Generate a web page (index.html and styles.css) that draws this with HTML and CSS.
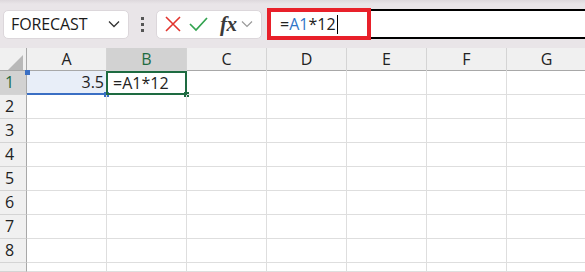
FILE: index.html
```html
<!DOCTYPE html>
<html lang="en">
<head>
	<meta charset="UTF-8">
	<title>Formula</title>
	<link rel="stylesheet" href="styles.css">
</head>
<body>
<div class="toolbar">
	<div class="namebox">
		<span class="name">FORECAST</span>
		<svg class="chev" width="12" height="8" viewBox="0 0 12 8"><path d="M1 1.5 L6 6.5 L11 1.5" fill="none" stroke="#333" stroke-width="1.3"/></svg>
	</div>
	<div class="dots"><i></i><i></i><i></i></div>
	<div class="fxbox">
		<svg width="18" height="18" viewBox="0 0 18 18"><path d="M2 2 L16 16 M16 2 L2 16" stroke="#e2342d" stroke-width="1.6"/></svg>
		<svg width="20" height="18" viewBox="0 0 20 18"><path d="M2 9 L8 15 L19 3" fill="none" stroke="#33a350" stroke-width="1.7"/></svg>
		<span class="fx">fx</span>
		<svg width="12" height="8" viewBox="0 0 12 8"><path d="M1 1.5 L6 6.5 L11 1.5" fill="none" stroke="#9a9a9a" stroke-width="1.2"/></svg>
	</div>
	<div class="formula">
		<div class="editing">=<span class="ref">A1</span>*12<span class="caret"></span></div>
		<div class="rest"></div>
	</div>
</div>

<div class="sheet">
	<div class="row head">
		<div class="corner"><span></span></div>
		<div class="col">A</div>
		<div class="col sel">B</div>
		<div class="col">C</div>
		<div class="col">D</div>
		<div class="col">E</div>
		<div class="col">F</div>
		<div class="col">G</div>
	</div>
	<div class="row">
		<div class="num sel">1</div>
		<div class="cell ref-cell">3.5<b class="h tl"></b><b class="h br"></b></div>
		<div class="cell active">=A1*12<b class="h br2"></b></div>
		<div class="cell"></div><div class="cell"></div><div class="cell"></div><div class="cell"></div><div class="cell"></div>
	</div>
	<div class="row">
		<div class="num">2</div>
		<div class="cell"></div><div class="cell"></div><div class="cell"></div><div class="cell"></div><div class="cell"></div><div class="cell"></div><div class="cell"></div>
	</div>
	<div class="row">
		<div class="num">3</div>
		<div class="cell"></div><div class="cell"></div><div class="cell"></div><div class="cell"></div><div class="cell"></div><div class="cell"></div><div class="cell"></div>
	</div>
	<div class="row">
		<div class="num">4</div>
		<div class="cell"></div><div class="cell"></div><div class="cell"></div><div class="cell"></div><div class="cell"></div><div class="cell"></div><div class="cell"></div>
	</div>
	<div class="row">
		<div class="num">5</div>
		<div class="cell"></div><div class="cell"></div><div class="cell"></div><div class="cell"></div><div class="cell"></div><div class="cell"></div><div class="cell"></div>
	</div>
	<div class="row">
		<div class="num">6</div>
		<div class="cell"></div><div class="cell"></div><div class="cell"></div><div class="cell"></div><div class="cell"></div><div class="cell"></div><div class="cell"></div>
	</div>
	<div class="row">
		<div class="num">7</div>
		<div class="cell"></div><div class="cell"></div><div class="cell"></div><div class="cell"></div><div class="cell"></div><div class="cell"></div><div class="cell"></div>
	</div>
	<div class="row">
		<div class="num">8</div>
		<div class="cell"></div><div class="cell"></div><div class="cell"></div><div class="cell"></div><div class="cell"></div><div class="cell"></div><div class="cell"></div>
	</div>
	<div class="row last">
		<div class="num"></div>
		<div class="cell"></div><div class="cell"></div><div class="cell"></div><div class="cell"></div><div class="cell"></div><div class="cell"></div><div class="cell"></div>
	</div>
</div>
</body>
</html>
```
FILE: styles.css
```css
* {
    margin: 0;
    padding: 0;
    box-sizing: border-box;
}

body {
    width: 585px;
    height: 272px;
    overflow: hidden;
    background-color: #fff;
    font-family: "Open Sans", "Noto Sans", sans-serif;
    color: #222;
}

/* top bar */
.toolbar {
    height: 48px;
    display: flex;
    align-items: center;
    padding-left: 3px;
    background: linear-gradient(#ddd8dc 0, #e9e5e8 4px, #e9e5e8 100%);
}

.namebox {
    width: 126px;
    height: 29px;
    background-color: #fff;
    border: 1px solid #dcd7db;
    border-radius: 5px;
    display: flex;
    align-items: center;
    justify-content: space-between;
    padding: 0 8px 0 7px;
}

.name {
    font-size: 16px;
    color: #1a1a1a;
    letter-spacing: -0.1px;
}

.dots {
    width: 27px;
    display: flex;
    flex-direction: column;
    align-items: center;
    gap: 3px;
}

.dots i {
    width: 3px;
    height: 3px;
    background-color: #555;
}

.fxbox {
    width: 106px;
    height: 29px;
    background-color: #fff;
    border: 1px solid #dcd7db;
    border-radius: 5px;
    display: flex;
    align-items: center;
    padding-left: 7px;
    gap: 6px;
}

.fx {
    font-family: "Liberation Serif", serif;
    font-style: italic;
    font-weight: bold;
    font-size: 21px;
    color: #3a3a3a;
    margin-left: 6px;
    margin-right: -2px;
    letter-spacing: -0.5px;
}

.formula {
    flex: 1;
    display: flex;
    align-items: center;
    margin-left: 5px;
}

.editing {
    width: 104px;
    height: 32px;
    border: 4px solid #e8202a;
    background-color: #fff;
    font-size: 16px;
    line-height: 24px;
    padding-left: 9px;
    display: flex;
    align-items: center;
    color: #222;
}

.ref {
    color: #2f75c8;
}

.caret {
    width: 1px;
    height: 19px;
    background-color: #000;
    margin-left: 1px;
}

.rest {
    flex: 1;
    height: 30px;
    background-color: #fff;
    border-top: 2px solid #000;
    border-bottom: 2px solid #000;
}

/* sheet grid */
.sheet {
    display: flex;
    flex-direction: column;
}

.row {
    display: grid;
    grid-template-columns: 27px repeat(7, 80px);
    height: 24px;
}

.row.last {
    height: 9px;
}

.row.head {
    height: 23px;
    background-color: #f0f0f0;
    border-bottom: 1px solid #a8a8a8;
}

.corner {
    border-right: 1px solid #a8a8a8;
    position: relative;
}

.corner span {
    position: absolute;
    right: 3px;
    bottom: 3px;
    width: 0;
    height: 0;
    border-left: 15px solid transparent;
    border-bottom: 15px solid #b8b8b8;
}

.col {
    border-right: 1px solid #d4d4d4;
    text-align: center;
    font-size: 16px;
    line-height: 23px;
    color: #222;
}

.col.sel {
    background-color: #d2d2d2;
    color: #1e6b41;
    border-bottom: 2px solid #1e6b41;
}

.num {
    background-color: #f0f0f0;
    border-right: 1px solid #a8a8a8;
    border-bottom: 1px solid #d4d4d4;
    font-size: 16px;
    line-height: 23px;
    padding-left: 5px;
    color: #222;
}

.num.sel {
    background-color: #d2d2d2;
    color: #1e6b41;
}

.cell {
    border-right: 1px solid #dedede;
    border-bottom: 1px solid #dedede;
    font-size: 16px;
    line-height: 22px;
    position: relative;
}

.ref-cell {
    background-color: #e8eef8;
    text-align: right;
    padding-right: 2px;
    border-bottom: 2px solid #3a6fc4;
}

.active {
    border: 2px solid #1e6b41;
    margin-left: -1px;
    padding-left: 5px;
    line-height: 20px;
}

.h {
    position: absolute;
    width: 5px;
    height: 5px;
}

.tl {
    left: -2px;
    top: -1px;
    background-color: #3a6fc4;
}

.br {
    right: -3px;
    bottom: -4px;
    background-color: #3a6fc4;
}

.br2 {
    right: -4px;
    bottom: -4px;
    background-color: #1e6b41;
}
```
